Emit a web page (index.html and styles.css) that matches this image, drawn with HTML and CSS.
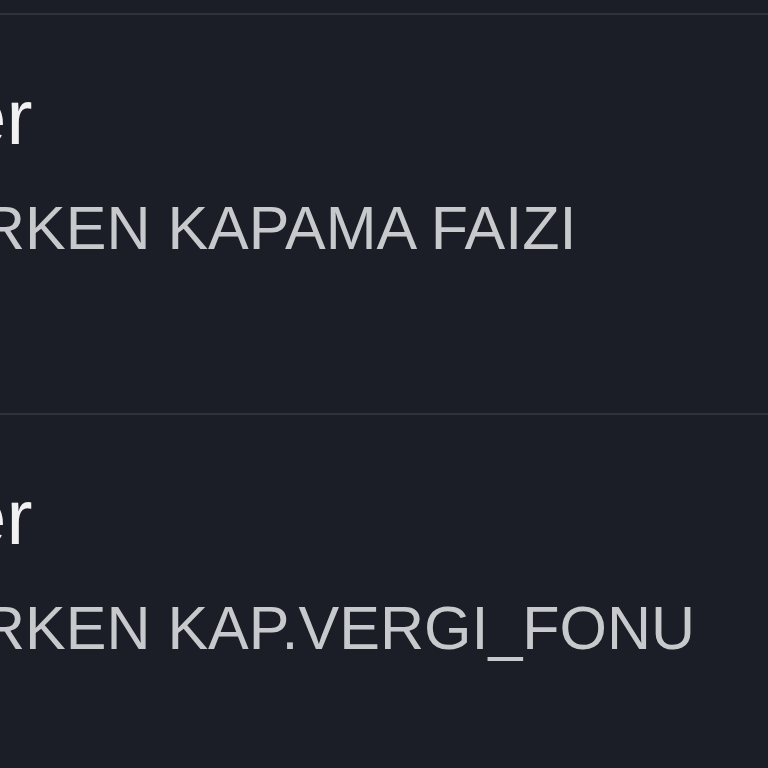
FILE: index.html
```html
<!DOCTYPE html>
<html lang="tr">
<head>
<meta charset="utf-8">
<title>Liste</title>
<link rel="stylesheet" href="styles.css">
</head>
<body>
<ul class="list">
  <li class="row">
    <div class="title">er</div>
    <div class="subtitle">RKEN KAPAMA FAIZI</div>
  </li>
  <li class="row">
    <div class="title">er</div>
    <div class="subtitle">RKEN KAP.VERGI_FONU</div>
  </li>
</ul>
</body>
</html>
```

FILE: styles.css
```css
html, body {
  margin: 0;
  padding: 0;
  background: #1b1e26;
  overflow: hidden;
}
body {
  width: 768px;
  height: 768px;
  font-family: "Liberation Sans", Arial, sans-serif;
}
.list {
  list-style: none;
  margin: 0;
  padding: 13px 0 0 0;
}
.row {
  border-top: 2px solid #2e323a;
  height: 398px;
  padding-top: 63px;
  box-sizing: border-box;
  height: 400px;
  white-space: nowrap;
}
.title {
  font-size: 78px;
  line-height: 78px;
  color: #f1f1f3;
  margin-left: -37px;
}
.subtitle {
  margin-top: 42px;
  font-size: 61px;
  line-height: 61px;
  color: #c8c9cd;
  margin-left: -19px;
}
```
